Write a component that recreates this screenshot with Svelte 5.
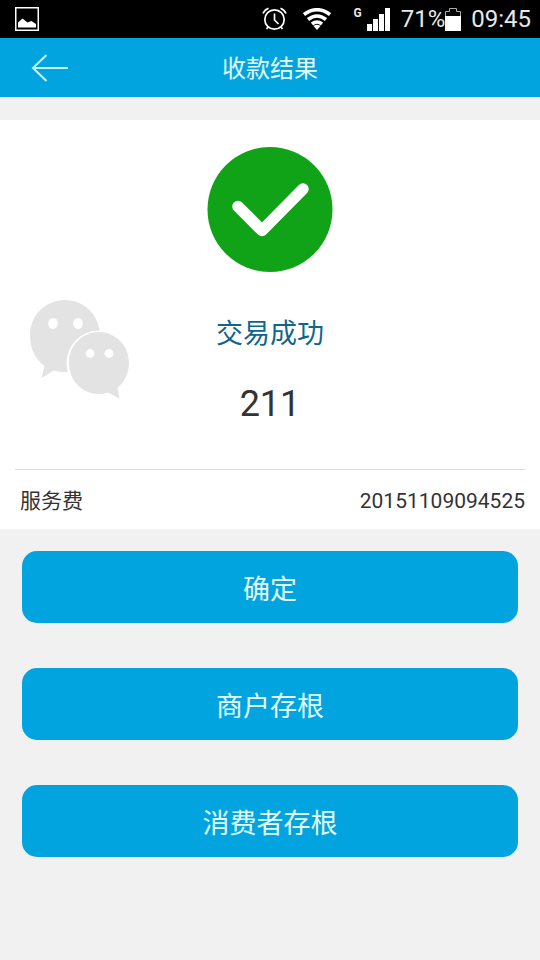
<script lang="ts">
  const title = '收款结果';
  const battery = 71;
  const time = '09:45';

  const result = {
    status: '交易成功',
    amount: '211',
    label: '服务费',
    serial: '20151109094525'
  };

  const actions = ['确定', '商户存根', '消费者存根'];
</script>

<svelte:head>
  <title>{title}</title>
</svelte:head>

<div class="status-bar">
  <svg class="picture" width="24" height="24" viewBox="0 0 24 24" aria-hidden="true">
    <rect x="0.75" y="0.75" width="22.5" height="22.5" fill="none" stroke="#fff" stroke-width="1.5" />
    <path d="M3 20.500V15.500L7.500 11.500L12.500 15.500L16.500 14L21 17V20.500Z" fill="#fff" />
  </svg>
  <svg class="alarm" width="25" height="24" viewBox="0 0 25 24" fill="none" stroke="#fff" stroke-width="1.700" aria-hidden="true">
    <circle cx="12.500" cy="12.500" r="9.700" />
    <path d="M12.500 6.500v6.500l4 4M1 6.500C2 4 4 2.200 6.500 1.200M24 6.500C23 4 21 2.200 18.500 1.200M6.500 19.500L4.500 22M18.500 19.500L20.500 22" />
  </svg>
  <svg class="wifi" width="28" height="22" viewBox="0 0 28 22" fill="none" stroke="#fff" stroke-width="3.600" aria-hidden="true">
    <path d="M1 6.500Q14 -3 27 6.500M5 11.500Q14 4.500 23 11.500M9 16Q14 12 19 16" />
    <path d="M10.500 18Q14 15.500 17.500 18L14 22Z" fill="#fff" stroke="none" />
  </svg>
  <span class="network">G</span>
  <svg class="signal" width="23" height="23" viewBox="0 0 23 23" fill="#fff" aria-hidden="true">
    <path d="M0 16h5v7h-5zM6 11h5v12h-5zM12 6h5v17h-5zM18 0h5v23h-5z" />
  </svg>
  <span class="percent">{battery}%</span>
  <svg class="battery" width="16" height="23" viewBox="0 0 16 23" aria-hidden="true">
    <path d="M0.500 22.500V3.500H4.500V0.500H11.500V3.500H15.500V22.500Z" fill="none" stroke="#aaa" />
    <path d="M0 8h16v15H0z" fill="#fff" />
  </svg>
  <span>{time}</span>
</div>

<header class="header">
  <button class="back" aria-label="返回">
    <svg width="38" height="28" viewBox="0 0 38 28" fill="none" stroke="#c4f6ff" stroke-width="2" aria-hidden="true">
      <path d="M37 14H2M15.500 1L2 14L15.500 27" />
    </svg>
  </button>
  <h1>{title}</h1>
</header>

<main>
  <section class="card">
    <div class="result">
      <svg class="tick" width="126" height="126" viewBox="0 0 126 126" aria-hidden="true">
        <circle cx="63" cy="62.500" r="62.500" fill="#10a318" />
        <path d="M31 59.500L55 83.500L96 42" fill="none" stroke="#fff" stroke-width="11.500" stroke-linecap="round" stroke-linejoin="round" />
      </svg>
      <svg class="wechat" width="100" height="100" viewBox="0 0 100 100" fill="#e3e3e3" aria-hidden="true">
        <path d="M35 0C54.500 0 70 15.500 70 36C70 56 54.500 72 35 72C31 72 27.500 71.500 24 70.500L11.500 78L14.500 66C5.500 59.500 0 48.500 0 36C0 15.500 15.500 0 35 0Z" />
        <ellipse cx="23" cy="23.500" rx="4.800" ry="5.600" fill="#fff" />
        <ellipse cx="48" cy="23.500" rx="4.800" ry="5.600" fill="#fff" />
        <circle cx="69" cy="63" r="32.500" fill="#fff" />
        <path d="M69 32C85.500 32 99 45.500 99 63C99 73 94.500 82 87.500 88L89.500 98.500L78 92.500C75 93.500 72 94 69 94C52 94 39 80.500 39 63C39 45.500 52 32 69 32Z" />
        <circle cx="60" cy="53.500" r="4.400" fill="#fff" />
        <circle cx="79" cy="53.500" r="4.400" fill="#fff" />
      </svg>
      <div class="summary">
        <p class="state">{result.status}</p>
        <p class="amount">{result.amount}</p>
      </div>
    </div>
    <div class="detail">
      <span>{result.label}</span>
      <span>{result.serial}</span>
    </div>
  </section>

  <div class="actions">
    {#each actions as action}
      <button>{action}</button>
    {/each}
  </div>
</main>

<style>
  :global(body) {
    margin: 0;
    background: #f1f1f1;
    color: #333;
    font-family: Roboto, "Noto Sans CJK SC", sans-serif;
  }
  button { border: 0; font-family: inherit; cursor: pointer; }
  h1, p { margin: 0; font-weight: 400; }

  .status-bar {
    display: flex;
    align-items: center;
    height: 38px;
    padding: 0 9px 0 15px;
    background: #000;
    color: #e8e8e8;
    font-size: 24px;
    line-height: 38px;
  }
  .picture { margin-right: auto; }
  .alarm { margin-right: 16px; }
  .wifi { margin-right: 17px; }
  .network { width: 14px; text-align: right; font-size: 12px; font-weight: 700; line-height: 12px; align-self: flex-start; padding-top: 7px; margin-right: 5px; }
  .signal { margin-right: 11px; }
  .battery { margin-right: 10px; }

  .header {
    display: grid;
    grid-template-columns: 1fr auto 1fr;
    align-items: center;
    height: 59px;
    background: #02a4e0;
  }
  .back { justify-self: start; display: flex; padding: 0 31px; background: none; }
  .header h1 { padding-top: 2px; color: #e2fbff; font-size: 24px; line-height: 32px; }

  .card { margin-top: 23px; padding: 0 15px; background: #fff; }
  .result {
    display: grid;
    grid-template-columns: 1fr auto 1fr;
    row-gap: 27px;
    padding: 27px 0 29px;
    border-bottom: 1px solid #ddd;
  }
  .tick { grid-column: 2; justify-self: center; }
  .wechat { grid-row: 2; margin-left: 15px; }
  .summary { grid-column: 2; text-align: center; }
  .state { color: #10658f; font-size: 27px; line-height: 68px; }
  .amount { font-size: 36px; line-height: 72px; }
  .detail {
    display: flex;
    justify-content: space-between;
    padding: 3px 0 0 5px;
    font-size: 21px;
    line-height: 56px;
  }

  .actions { display: flex; flex-direction: column; gap: 45px; padding: 22px; }
  .actions button {
    height: 72px;
    border-radius: 15px;
    background: #02a4e0;
    color: #e2fbff;
    font-size: 27px;
  }
</style>
